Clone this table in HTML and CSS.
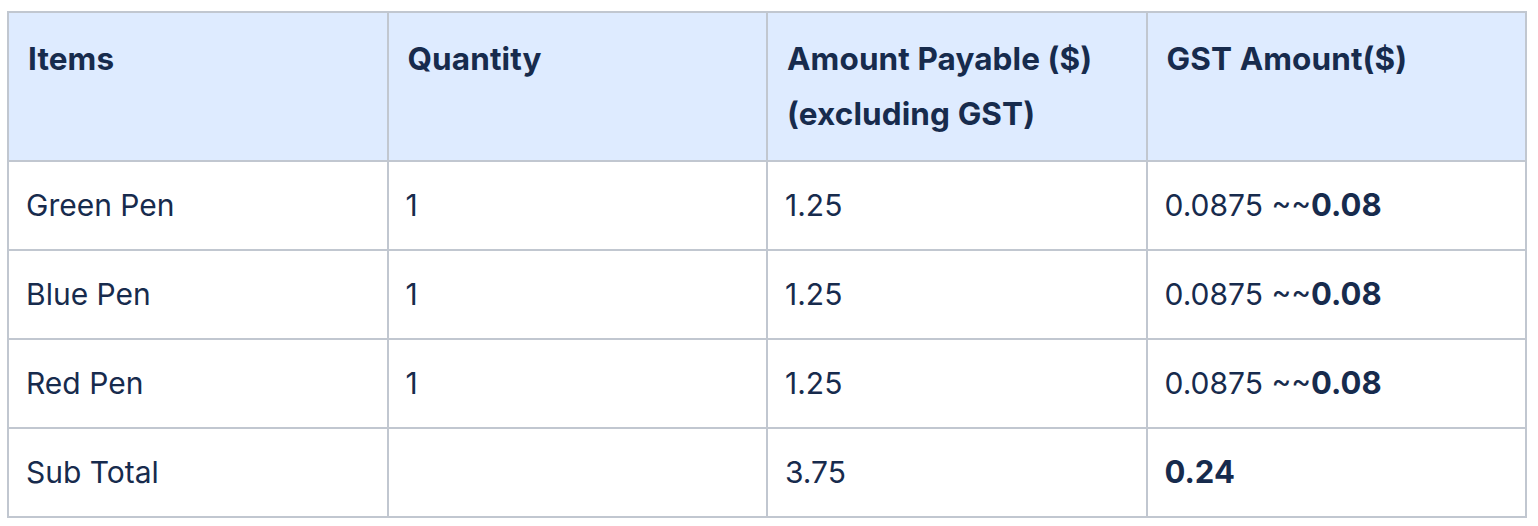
FILE: index.html
```html
<!DOCTYPE html>
<html lang="en">
<head>
<meta charset="utf-8">
<title>GST Table</title>
<link rel="stylesheet" href="styles.css">
</head>
<body>
<table class="gst-table">
  <colgroup>
    <col class="col">
    <col class="col">
    <col class="col">
    <col class="col">
  </colgroup>
  <thead>
    <tr>
      <th>Items</th>
      <th>Quantity</th>
      <th>Amount Payable ($)<br>(excluding GST)</th>
      <th>GST Amount($)</th>
    </tr>
  </thead>
  <tbody>
    <tr>
      <td>Green Pen</td>
      <td>1</td>
      <td>1.25</td>
      <td>0.0875 ~~<strong>0.08</strong></td>
    </tr>
    <tr>
      <td>Blue Pen</td>
      <td>1</td>
      <td>1.25</td>
      <td>0.0875 ~~<strong>0.08</strong></td>
    </tr>
    <tr>
      <td>Red Pen</td>
      <td>1</td>
      <td>1.25</td>
      <td>0.0875 ~~<strong>0.08</strong></td>
    </tr>
    <tr>
      <td>Sub Total</td>
      <td></td>
      <td>3.75</td>
      <td><strong>0.24</strong></td>
    </tr>
  </tbody>
</table>
</body>
</html>
```
FILE: styles.css
```css
html, body {
  margin: 0;
  padding: 0;
  background: #ffffff;
}

body {
  padding: 11px 0 0 7px;
  font-family: Inter, "Noto Sans", "Liberation Sans", sans-serif;
  color: #172b4d;
  font-size: 30px;
  line-height: 55px;
}

.gst-table {
  border-collapse: collapse;
  table-layout: fixed;
  width: 1520px;
}

.col {
  width: 25%;
}

.gst-table th,
.gst-table td {
  border: 2px solid #c1c7d0;
  text-align: left;
  vertical-align: top;
}

.gst-table th {
  background: #deebff;
  font-weight: 700;
  font-size: 31.5px;
  letter-spacing: 0.1px;
  padding: 18px 19px 19px 19px;
  height: 110px;
}

.gst-table td {
  font-weight: 400;
  padding: 16px 17px 16px 17px;
  height: 55px;
}

.gst-table strong {
  font-weight: 700;
  font-size: 31px;
  line-height: 1;
}
```
